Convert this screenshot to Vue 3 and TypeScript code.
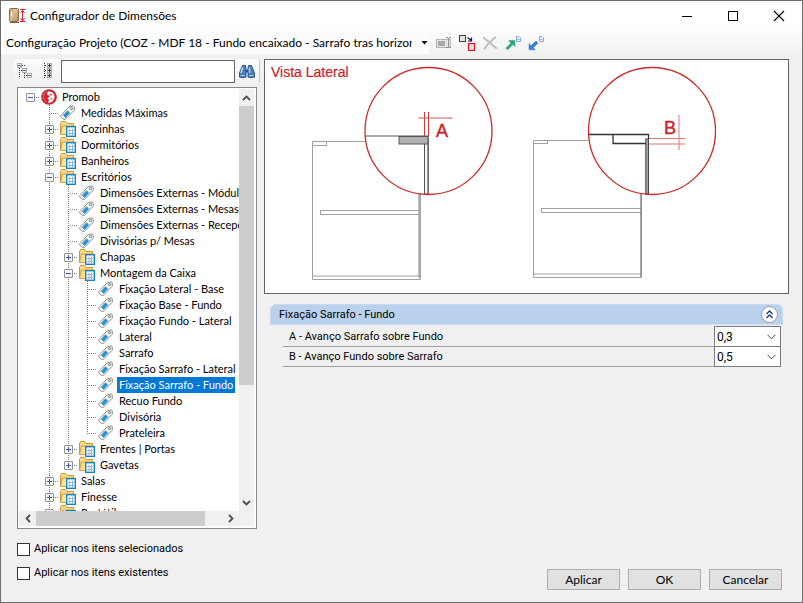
<script setup lang="ts">
import { computed, ref } from 'vue'

interface TreeNode {
  label: string
  kind: 'root' | 'folder' | 'tag'
  open?: boolean
  children?: TreeNode[]
}

interface TreeRow {
  node: TreeNode
  level: number
  last: boolean
  guides: boolean[]
}

const tag = (label: string): TreeNode => ({ label, kind: 'tag' })
const folder = (label: string, children: TreeNode[] = [], open = false): TreeNode => ({
  label,
  kind: 'folder',
  open,
  children,
})

const tree = ref<TreeNode>({
  label: 'Promob',
  kind: 'root',
  open: true,
  children: [
    tag('Medidas Máximas'),
    folder('Cozinhas'),
    folder('Dormitórios'),
    folder('Banheiros'),
    folder('Escritórios', [
      tag('Dimensões Externas - Módulos'),
      tag('Dimensões Externas - Mesas'),
      tag('Dimensões Externas - Recepção'),
      tag('Divisórias p/ Mesas'),
      folder('Chapas'),
      folder('Montagem da Caixa', [
        tag('Fixação Lateral - Base'),
        tag('Fixação Base - Fundo'),
        tag('Fixação Fundo - Lateral'),
        tag('Lateral'),
        tag('Sarrafo'),
        tag('Fixação Sarrafo - Lateral'),
        tag('Fixação Sarrafo - Fundo'),
        tag('Recuo Fundo'),
        tag('Divisória'),
        tag('Prateleira'),
      ], true),
      folder('Frentes | Portas'),
      folder('Gavetas'),
    ], true),
    folder('Salas'),
    folder('Finesse'),
    folder('Portátil'),
    folder('Outros'),
  ],
})

const selected = ref('Fixação Sarrafo - Fundo')
const search = ref('')
const applySelected = ref(false)
const applyExisting = ref(false)
const groupOpen = ref(true)

const fields = ref([
  { id: 'field-a', label: 'A - Avanço Sarrafo sobre Fundo', value: '0,3' },
  { id: 'field-b', label: 'B - Avanço Fundo sobre Sarrafo', value: '0,5' },
])
const values = ['0', '0,3', '0,5', '1']

const rows = computed<TreeRow[]>(() => {
  const out: TreeRow[] = []
  const walk = (node: TreeNode, level: number, last: boolean, guides: boolean[]) => {
    out.push({ node, level, last, guides })
    if (!node.open || !node.children) return
    node.children.forEach((child, i) =>
      walk(child, level + 1, i === node.children!.length - 1, [...guides, !last]),
    )
  }
  walk(tree.value, 0, true, [])
  return out
})

function setAll(node: TreeNode, open: boolean) {
  if (node.kind === 'folder') node.open = open
  node.children?.forEach((child) => setAll(child, open))
}
</script>

<template>
  <main class="window">
    <header class="titlebar">
      <svg class="app-icon" width="18" height="16" viewBox="0 0 18 16" aria-hidden="true">
        <defs>
          <linearGradient id="wood" x1="0" y1="0" x2="1" y2="1">
            <stop offset="0" stop-color="#c9a67c" /><stop offset="0.4" stop-color="#dcc19c" /><stop offset="1" stop-color="#b08a5c" />
          </linearGradient>
        </defs>
        <rect x="0.5" y="0.5" width="9" height="13" rx="1" fill="url(#wood)" stroke="#8b6c48" />
        <path d="M1 14.5h9" stroke="#6d5a44" />
        <path d="M2.5 4v4" stroke="#fff" />
        <path d="M11 1.500h5M11 13.500h5M13.500 2v11M11.500 4.500l2-2 2 2M11.500 10.500l2 2 2-2" fill="none" stroke="#e0182d" />
      </svg>
      <h1>Configurador de Dimensões</h1>
      <div class="caption">
        <button type="button" aria-label="Minimizar">
          <svg width="12" height="12" viewBox="0 0 12 12"><path d="M1 6.500h10" stroke="#000" /></svg>
        </button>
        <button type="button" aria-label="Maximizar">
          <svg width="12" height="12" viewBox="0 0 12 12"><rect x="1.500" y="1.500" width="9" height="9" fill="none" stroke="#000" /></svg>
        </button>
        <button type="button" aria-label="Fechar">
          <svg width="12" height="12" viewBox="0 0 12 12"><path d="M1 1l10 10M11 1L1 11" stroke="#000" stroke-width="1.1" /></svg>
        </button>
      </div>
    </header>

    <div class="toolbar">
      <div class="combo">
        <select aria-label="Configuração">
          <option>Configuração Projeto (COZ - MDF 18 - Fundo encaixado - Sarrafo tras horizontal)</option>
        </select>
        <svg width="7" height="4" viewBox="0 0 7 4" aria-hidden="true"><path d="M0.500 0h6L3.500 3.500z" fill="#000" /></svg>
      </div>
      <button type="button" aria-label="Renomear">
        <svg width="16" height="16" viewBox="0 0 16 16">
          <rect x="0.500" y="4.500" width="14" height="8" fill="#e4e4e4" stroke="#b4b4b4" />
          <rect x="2" y="6" width="7" height="5" fill="#a9a9a9" />
          <path d="M10 2.500h2M13 2.500h2M12.500 3v9M10 12.500h2M13 12.500h2" stroke="#8e8e8e" fill="none" />
        </svg>
      </button>
      <button type="button" aria-label="Substituir">
        <svg width="16" height="16" viewBox="0 0 16 16">
          <rect x="0.500" y="0.500" width="6" height="6" fill="#e3e3ea" stroke="#4b3d3d" />
          <path d="M8.500 2.500l4 3M12.500 2.500v3.500h-3.500" fill="none" stroke="#10106e" stroke-width="1.200" />
          <rect x="9.500" y="8.500" width="6" height="7" fill="#e6e3e8" stroke="#e8121c" stroke-width="1.200" />
        </svg>
      </button>
      <button type="button" aria-label="Excluir">
        <svg width="16" height="16" viewBox="0 0 16 16"><path d="M2 3q5 4 12 10M13 2.500Q6 8 2.500 13.500" fill="none" stroke="#bdbdbd" stroke-width="2.200" stroke-linecap="round" /></svg>
      </button>
      <button type="button" aria-label="Exportar">
        <svg width="16" height="16" viewBox="0 0 16 16">
          <path d="M11.500 1.500h2.500l1.500 1.500v3.500h-4z" fill="#e8f1fb" stroke="#85aedb" /><path d="M12.500 4.500h2" stroke="#85aedb" />
          <path d="M10 5.500v6L8 9.500l-5.500 5.300L0.800 13 6 8 3.500 5.500z" fill="#2ba77c" stroke="#2ba77c" stroke-width="0.500" />
        </svg>
      </button>
      <button type="button" aria-label="Importar">
        <svg width="16" height="16" viewBox="0 0 16 16">
          <path d="M11.500 1.500h2.500l1.500 1.500v3.500h-4z" fill="#e8f1fb" stroke="#85aedb" /><path d="M12.500 4.500h2" stroke="#85aedb" />
          <path d="M1 8.500v6.300h6.300L5.300 12.800l4.700-4.700-2-2-4.800 4.500z" fill="#337fd2" stroke="#337fd2" stroke-width="0.500" />
        </svg>
      </button>
    </div>

    <div class="content">
      <aside class="side">
        <div class="tools">
          <button type="button" aria-label="Recolher tudo" @click="setAll(tree, false)">
            <svg width="16" height="16" viewBox="0 0 16 16" shape-rendering="crispEdges">
              <path d="M2.500 5v10M7.500 10v6" stroke="#333" stroke-dasharray="1 1" />
              <path d="M4 7.500h2M9 12.500h2M5 2.500h3" stroke="#333" stroke-dasharray="1 1" />
              <g fill="#f6f6f6" stroke="#a4afbc"><rect x="0.500" y="0.500" width="4" height="4" /><rect x="5.500" y="5.500" width="4" height="4" /><rect x="10.500" y="10.500" width="4" height="4" /></g>
              <path d="M1 2.500h3M6 7.500h3M11 12.500h3" stroke="#666" />
            </svg>
          </button>
          <button type="button" aria-label="Expandir tudo" @click="setAll(tree, true)">
            <svg width="16" height="16" viewBox="0 0 16 16" shape-rendering="crispEdges">
              <path d="M4.500 0v16M5 2.500h3M5 7.500h3M5 12.500h3" stroke="#333" stroke-dasharray="1 1" />
              <g fill="#f6f6f6" stroke="#aaa"><rect x="7.500" y="0.500" width="4" height="4" /><rect x="7.500" y="5.500" width="4" height="4" /><rect x="7.500" y="10.500" width="4" height="4" /></g>
              <path d="M8 2.500h3M8 7.500h3M8 12.500h3M9.500 1v3M9.500 6v3M9.500 11v3" stroke="#333" />
            </svg>
          </button>
          <input v-model="search" type="text" aria-label="Pesquisar" />
          <button type="button" class="find" aria-label="Localizar">
            <svg width="16" height="15" viewBox="0 0 16 15">
              <g fill="#4a7fb9" stroke="#264a80" stroke-width="0.900">
                <path d="M3.500 1.500h3l0.500 3v8.500q-3 1.500-6.500 0V9z" />
                <path d="M12.500 1.500h-3l-0.500 3v8.500q3 1.500 6.500 0V9z" />
              </g>
              <path d="M6.500 5.500h3v3h-3z" fill="#2d5590" />
              <path d="M3.800 3.500L2 9M10.500 3.500V9" stroke="#b9d7f2" stroke-width="1.500" fill="none" />
              <path d="M1.500 11.500h4.500M10 11.500h4.500" stroke="#a9c8e8" />
            </svg>
          </button>
        </div>

        <div class="tree-box">
          <ul class="tree" role="tree" aria-label="Dimensões">
            <li v-for="(row, i) in rows" :key="i" role="treeitem" :aria-selected="row.node.label === selected">
              <template v-for="(guide, g) in row.guides" :key="g">
                <svg class="cell" viewBox="0 0 19 16" aria-hidden="true">
                  <path v-if="guide" d="M9.500 0v16" />
                </svg>
              </template>
              <span class="cell joint">
                <svg viewBox="0 0 19 16" width="19" height="16" aria-hidden="true">
                  <path v-if="row.level > 0" :d="row.last ? 'M9.500 0v8' : 'M9.500 0v16'" />
                  <path d="M9 8.500h10" />
                </svg>
                <button
                  v-if="row.node.kind !== 'tag'"
                  type="button"
                  class="toggle"
                  :aria-label="(row.node.open ? 'Recolher ' : 'Expandir ') + row.node.label"
                  @click="row.node.open = !row.node.open"
                >
                  <svg width="9" height="9" viewBox="0 0 9 9" aria-hidden="true">
                    <rect x="0.500" y="0.500" width="8" height="8" rx="0.500" fill="#f7f7f7" stroke="#919191" />
                    <path class="sign" d="M2 4.500h5" />
                    <path v-if="!row.node.open" class="sign" d="M4.500 2v5" />
                  </svg>
                </button>
              </span>
              <svg v-if="row.node.kind === 'root'" class="icon" viewBox="0 0 16 16" aria-hidden="true">
                <circle cx="8" cy="8" r="7.800" fill="#d3202e" />
                <path d="M7 2.500q5-.5 6.500 4 .3 4.500-3.500 7l-2.800.5.800-3.500-1.800-1L9 7 5.800 5.500z" fill="#fff" />
                <path d="M6 2.300Q2.500 4 2.300 7.800 2.500 11.500 5.500 13.300" fill="none" stroke="#ee8f96" stroke-width="0.800" />
                <path d="M8.500 5.500l3 .5M9.500 9.500l2 .5" fill="none" stroke="#d3202e" />
              </svg>
              <svg v-else-if="row.node.kind === 'folder'" class="icon" viewBox="0 0 16 16" aria-hidden="true">
                <path d="M0.500 13.500V2.500l1-2h4l1.500 2h6.500v4" fill="#f9da85" stroke="#cf9440" />
                <path d="M0.500 13.500l2-8.500h12l-2 8.500z" fill="#fce49b" stroke="#d79a3f" />
                <rect x="6.700" y="5.700" width="8.600" height="9.600" fill="#fff" stroke="#1583c0" stroke-width="1.400" />
                <path d="M8 9.500h6M8 12.500h6M10 7.500v7M12.500 7.500v7" stroke="#8fb9dc" />
              </svg>
              <svg v-else class="icon" viewBox="0 0 16 16" aria-hidden="true">
                <path d="M0.700 10.800L9 1.800 13 0.700l1.300 1v3.500L5.300 14.500H4L0.700 12z" fill="#f4f4f4" stroke="#929292" />
                <path d="M3.300 10.300l4.200-4.600 2.300 2.200-4.200 4.600z" fill="#2397d6" stroke="#187aae" stroke-width="0.500" />
                <circle cx="11.500" cy="3.500" r="1.200" fill="#ddd" stroke="#777" stroke-width="0.800" />
              </svg>
              <button type="button" class="node" :class="{ on: row.node.label === selected }" @click="selected = row.node.label">
                {{ row.node.label }}
              </button>
            </li>
          </ul>
          <div class="bar vertical">
            <button type="button" aria-label="Rolar para cima"><svg width="9" height="6" viewBox="0 0 9 6"><path d="M1 5l3.500-3.500L8 5" /></svg></button>
            <div class="track"><div class="thumb"></div></div>
            <button type="button" aria-label="Rolar para baixo"><svg width="9" height="6" viewBox="0 0 9 6"><path d="M1 1l3.500 3.500L8 1" /></svg></button>
          </div>
          <div class="bar horizontal">
            <button type="button" aria-label="Rolar para a esquerda"><svg width="6" height="9" viewBox="0 0 6 9"><path d="M5 1L1.500 4.500 5 8" /></svg></button>
            <div class="track"><div class="thumb"></div></div>
            <button type="button" aria-label="Rolar para a direita"><svg width="6" height="9" viewBox="0 0 6 9"><path d="M1 1l3.500 3.500L1 8" /></svg></button>
          </div>
          <div class="corner"></div>
        </div>

        <div class="checks">
          <label><input v-model="applySelected" type="checkbox" />Aplicar nos itens selecionados</label>
          <label><input v-model="applyExisting" type="checkbox" />Aplicar nos itens existentes</label>
        </div>
      </aside>

      <section class="main">
        <figure class="preview">
          <svg viewBox="0 0 523 233" role="img" aria-label="Vista Lateral">
            <text class="heading" x="6" y="17" font-size="14">Vista Lateral</text>
            <!-- cabinet, detail A -->
            <g class="thin">
              <path d="M101 81.500H47.500V219.500H155.500M155.500 134V219.500M154 134V217M47.500 216H155M47.500 85.500H61.500V81.500" />
              <path d="M154 150.500H55.500V154.500H154" />
            </g>
            <path d="M154.500 134V218" stroke="#aaa" stroke-width="2" />
            <rect x="159.500" y="80" width="4" height="54" fill="#f4f4f4" stroke="#555" />
            <path d="M163 76V134" stroke="#777" stroke-width="1.500" />
            <path d="M101 76H163" stroke="#555" stroke-width="1.200" />
            <rect x="134" y="76.500" width="29" height="7.500" fill="#b0b0b0" stroke="#555" />
            <path d="M153.500 58H187.500" stroke="#dd8f8f" stroke-width="1.500" />
            <path d="M159.500 52V76M163.500 52V76" stroke="#cf3b3b" />
            <circle cx="163.500" cy="71" r="63.500" />
            <text class="letter" x="171" y="77" font-size="18">A</text>
            <!-- cabinet, detail B -->
            <g class="thin">
              <path d="M323 80.500H268.500V217.500H376.500V134M268.500 214H376M268.500 83.500H282.500V80.500" />
              <path d="M376 148.500H276.500V152.500H376" />
            </g>
            <path d="M376 134V217" stroke="#888" stroke-width="1.500" />
            <path d="M323.500 74.500H383.500V79M348 74.500V83.500H381" fill="none" stroke="#333" stroke-width="1.300" />
            <rect x="380.800" y="79" width="2.700" height="55" fill="#a5a5a5" stroke="#444" />
            <path d="M384 78.500H420M384 84H420M414 55V90" stroke="#dd7777" />
            <circle cx="387" cy="71" r="63.500" />
            <text class="letter" x="399" y="74" font-size="18">B</text>
          </svg>
        </figure>

        <section class="group">
          <header>
            <h2>Fixação Sarrafo - Fundo</h2>
            <button type="button" aria-label="Recolher grupo" :aria-expanded="groupOpen" @click="groupOpen = !groupOpen">
              <svg width="9" height="9" viewBox="0 0 9 9"><path d="M1.500 4l3-3 3 3M1.500 8l3-3 3 3" fill="none" stroke="#1f3a75" stroke-width="1.400" /></svg>
            </button>
          </header>
          <div v-if="groupOpen" class="fields">
            <div v-for="field in fields" :key="field.id" class="field">
              <label :for="field.id">{{ field.label }}</label>
              <div class="pick">
                <select :id="field.id" v-model="field.value">
                  <option v-for="v in values" :key="v">{{ v }}</option>
                </select>
                <svg width="9" height="6" viewBox="0 0 9 6" aria-hidden="true"><path d="M0.500 0.800l4 4 4-4" fill="none" stroke="#444" /></svg>
              </div>
            </div>
          </div>
        </section>

        <footer class="actions">
          <button type="button">Aplicar</button>
          <button type="button">OK</button>
          <button type="button">Cancelar</button>
        </footer>
      </section>
    </div>
  </main>
</template>

<style>
body {
  margin: 0;
}
</style>

<style scoped>
* {
  box-sizing: border-box;
}
.window {
  display: flex;
  flex-direction: column;
  height: 100vh;
  min-height: 480px;
  min-width: 640px;
  border: 1px solid #6d6d6d;
  background: #f0f0f0;
  color: #000;
  font: 11px/16px Roboto, Arial, sans-serif;
}
button,
input,
select {
  margin: 0;
  padding: 0;
  border: 0;
  background: none;
  color: inherit;
  font: inherit;
}
svg {
  display: block;
  flex: none;
}
h1,
h2 {
  margin: 0;
  font: inherit;
}

.titlebar {
  display: flex;
  align-items: center;
  height: 30px;
  padding-left: 8px;
  background: #fff;
}
.titlebar h1 {
  flex: 1;
  margin-left: 3px;
  font: 12px/16px Lato, sans-serif;
}
.caption {
  display: flex;
  align-self: stretch;
}
.caption button {
  display: flex;
  align-items: center;
  justify-content: center;
  width: 46px;
}

.toolbar {
  display: flex;
  align-items: center;
  gap: 7px;
  height: 24px;
  background: linear-gradient(#fcfcfc, #f0f0f0);
}
.combo {
  display: flex;
  align-items: center;
  width: 428px;
  height: 22px;
  padding-right: 1px;
  background: #fcfcfc;
}
.combo select {
  flex: 1;
  min-width: 0;
  height: 22px;
  margin-right: 9px;
  padding-left: 5px;
  appearance: none;
  font: 12px/16px Lato, sans-serif;
  overflow: hidden;
}

.content {
  display: grid;
  grid-template-columns: 246px 1fr;
  gap: 4px;
  flex: 1;
  min-height: 0;
  padding: 4px 13px 0;
}
.side {
  display: flex;
  flex-direction: column;
  min-height: 0;
}
.tools {
  display: flex;
  align-items: center;
  height: 24px;
  padding-left: 3px;
  border-right: 1px solid #c8c8c8;
  border-radius: 3px;
  background: linear-gradient(#fcfcfc, #f1f1f1);
}
.tools button {
  margin-right: 7px;
}
.tools input {
  flex: 1;
  min-width: 0;
  height: 23px;
  margin-left: -2px;
  padding: 0 4px;
  border: 1px solid #646464;
  background: #fff;
}
.tools .find {
  margin: 0 4px;
}

.tree-box {
  display: grid;
  grid-template-columns: 1fr 15px;
  grid-template-rows: 1fr 15px;
  flex: 1;
  min-height: 0;
  width: 240px;
  margin: 4px 0 0 3px;
  padding: 1px 2px 2px 1px;
  border: 1px solid #828790;
  background: #fff;
}
.tree {
  min-width: 0;
  min-height: 0;
  margin: 0;
  padding: 0 0 0 2px;
  overflow: hidden;
  list-style: none;
  font-family: Lato, sans-serif;
}
.tree li {
  display: flex;
  height: 16px;
}
.cell {
  flex: none;
  width: 19px;
  height: 16px;
}
.joint {
  display: grid;
  place-items: center;
}
.joint > * {
  grid-area: 1 / 1;
}
.cell path {
  stroke: #808080;
  stroke-dasharray: 1 1;
  shape-rendering: crispEdges;
}
.cell .sign {
  stroke: #3f5cab;
  stroke-dasharray: none;
}
.toggle {
  padding-top: 1px;
}
.icon {
  width: 16px;
  height: 16px;
  margin: 0 3px 0 1px;
}
.node {
  padding: 0 2px;
  white-space: nowrap;
}
.node.on {
  background: #0078d7;
  color: #fff;
}

.bar {
  display: flex;
  background: #f0f0f0;
}
.bar button {
  display: flex;
  align-items: center;
  justify-content: center;
  flex: none;
  width: 17px;
  height: 17px;
}
.bar button path {
  fill: none;
  stroke: #505050;
  stroke-width: 1.8;
}
.vertical {
  flex-direction: column;
}
.vertical button {
  width: 15px;
}
.horizontal button {
  height: 15px;
}
.track {
  flex: 1;
}
.thumb {
  background: #cdcdcd;
}
.vertical .thumb {
  height: 72%;
}
.horizontal .thumb {
  width: 91%;
  height: 100%;
}
.corner {
  background: #f0f0f0;
}

.checks {
  margin: 8px 0 17px 3px;
}
.checks label {
  display: flex;
  align-items: center;
  gap: 4px;
  height: 24px;
}
.checks input {
  appearance: none;
  width: 13px;
  height: 13px;
  border: 1px solid #333;
  background: #fff;
}
.checks input:checked {
  box-shadow: inset 0 0 0 2px #fff;
  background: #333;
}

.main {
  display: flex;
  flex-direction: column;
  min-width: 0;
}
.preview {
  margin: 0;
  border: 1px solid #646464;
  background: #fff;
}
.preview svg {
  width: 100%;
  height: auto;
}
.preview text {
  fill: #d02028;
  font-family: "Liberation Sans", sans-serif;
}
.preview .heading {
  stroke: #d02028;
  stroke-width: 0.2;
}
.preview .letter {
  stroke: #d02028;
  stroke-width: 0.4;
}
.preview circle {
  fill: none;
  stroke: #cc2a2a;
  stroke-width: 1.3;
}
.thin {
  fill: none;
  stroke: #a0a0a0;
}

.group {
  margin: 10px 6px 0;
}
.group header {
  display: flex;
  align-items: center;
  justify-content: space-between;
  height: 21px;
  padding: 0 4px 0 8px;
  border: 1px solid #c9dbf0;
  border-radius: 6px 6px 0 0;
  background: #b9d1ec;
}
.group header button {
  display: flex;
  align-items: center;
  justify-content: center;
  width: 17px;
  height: 17px;
  border: 1px solid #9a9aa8;
  border-radius: 50%;
  background: #fff;
}
.fields {
  margin: 2px 2px 0 13px;
}
.field {
  display: flex;
}
.field label {
  flex: 1;
  height: 20px;
  padding: 2px 6px;
  border-bottom: 1px solid #a0a0a0;
}
.pick {
  display: grid;
  align-items: center;
  width: 67px;
  height: 21px;
  margin-top: -1px;
  border: 1px solid #7a7a7a;
  background: #fff;
}
.pick > * {
  grid-area: 1 / 1;
}
.pick select {
  width: 100%;
  height: 19px;
  padding-left: 2px;
  appearance: none;
  font-size: 12px;
}
.pick svg {
  justify-self: end;
  margin-right: 4px;
  pointer-events: none;
}

.actions {
  display: flex;
  justify-content: flex-end;
  gap: 8px;
  margin-top: auto;
  padding: 12px 7px;
}
.actions button {
  width: 73px;
  height: 21px;
  border: 1px solid #adadad;
  background: #e1e1e1;
  font: 12px/16px Lato, sans-serif;
}
</style>
